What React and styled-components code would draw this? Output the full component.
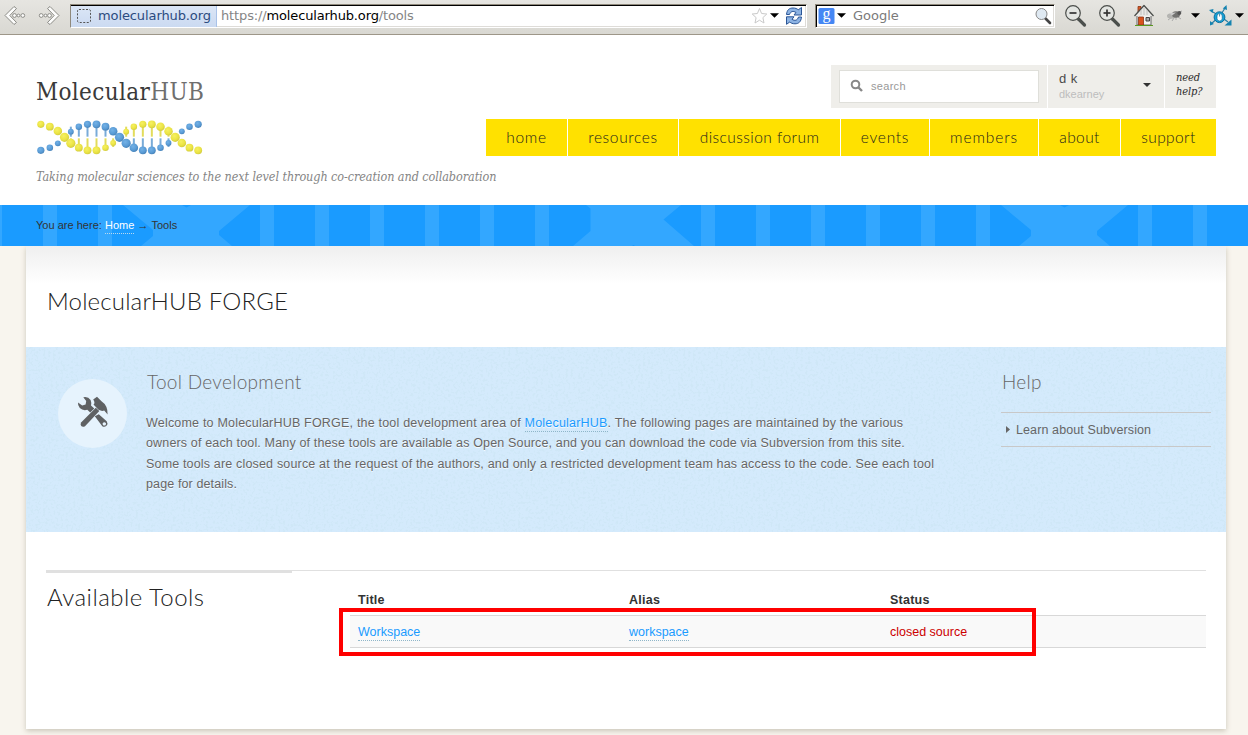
import React from "react";
import styled, { createGlobalStyle } from "styled-components";

const Global = createGlobalStyle`
  * { box-sizing: border-box; }
  html, body { margin: 0; padding: 0; }
  body {
    background: #f8f5ee;
    color: #333;
    font-family: "Liberation Sans", Arial, Helvetica, sans-serif;
    font-size: 12px;
    overflow: hidden;
  }
`;

const Page = styled.div`
  width: 1248px;
  height: 735px;
  overflow: hidden;
`;

/* ---------- browser toolbar ---------- */

const Toolbar = styled.div`
  display: flex;
  align-items: flex-start;
  height: 35px;
  padding: 4px 4px 0 4px;
  background: linear-gradient(#e6e5e1, #d9d8d2);
  border-bottom: 1px solid #9d9688;
  font-family: "DejaVu Sans", Verdana, sans-serif;
  font-size: 13px;
`;

const ToolIcon = styled.svg`
  display: block;
  flex: none;
  width: ${(p) => p.$w}px;
  height: 24px;
  margin-left: ${(p) => p.$gap || 0}px;
`;

const Field = styled.div`
  display: flex;
  align-items: center;
  flex: none;
  width: ${(p) => p.$w}px;
  height: 24px;
  margin-left: ${(p) => p.$gap}px;
  background: #fff;
  border: 1px solid;
  border-color: #8f897c #fff #fff #8f897c;
  box-shadow: inset 1px 1px 0 #000, inset 0 -1px 0 #dedcd8, inset -1px 0 0 #dedcd8;
`;

const Identity = styled.div`
  display: flex;
  align-items: center;
  width: 146px;
  height: 21px;
  padding: 0 0 1px 6px;
  background: linear-gradient(#dbe6f6, #cbdaf1);
  border-right: 1px solid #a9c2e8;
  color: #2b4b80;
  letter-spacing: -0.1px;
  span { margin-left: 7px; white-space: nowrap; }
`;

const Address = styled.div`
  flex: 1;
  padding: 0 0 2px 4px;
  color: #858585;
  letter-spacing: -0.14px;
  white-space: nowrap;
  b { font-weight: normal; color: #000; }
`;

const Placeholder = styled.div`
  flex: 1;
  padding: 0 0 2px 7px;
  color: #7a7a7a;
`;

const FieldIcon = styled.svg`
  display: block;
  flex: none;
  width: ${(p) => p.$w}px;
  height: 20px;
  margin-left: ${(p) => p.$gap || 0}px;
`;

/* ---------- site header ---------- */

const Header = styled.header`
  display: flex;
  justify-content: space-between;
  height: 170px;
  padding: 30px 32px 0 36px;
  background: #fff;
`;

const Brand = styled.div`
  width: 450px;
`;

const Logo = styled.div`
  height: 54px;
  padding-top: 13px;
  color: #3a3a3a;
  font: 24px/28px "DejaVu Serif Condensed", "DejaVu Serif", serif;
  font-stretch: condensed;
  letter-spacing: 0.37px;
  white-space: nowrap;
  em { font-style: normal; color: #6e6e6e; }
`;

const Helix = styled.svg`
  display: block;
  width: 167px;
  height: 35px;
  margin-top: 1px;
`;

const Tagline = styled.div`
  margin-top: 12px;
  color: #858585;
  font: italic 12.5px/20px "DejaVu Serif Condensed", "DejaVu Serif", serif;
  font-stretch: condensed;
  letter-spacing: -0.07px;
  white-space: nowrap;
`;

const HeaderRight = styled.div`
  display: flex;
  flex-direction: column;
  align-items: flex-end;
`;

const Account = styled.div`
  display: flex;
  gap: 1px;
  height: 43px;
`;

const AccountCell = styled.div`
  width: ${(p) => p.$w}px;
  background: #efeeea;
`;

const SearchBox = styled.div`
  display: flex;
  align-items: center;
  width: 200px;
  height: 33px;
  margin: 5px 0 0 8px;
  padding: 0 0 2px 10px;
  background: #fff;
  border: 1px solid #dfdfda;
  color: #999;
  font-size: 11px;
  letter-spacing: 0.3px;
  svg { margin-right: 7px; }
`;

const User = styled(AccountCell)`
  display: flex;
  justify-content: space-between;
  padding: 6px 13px 0 11px;
  svg { margin-top: 12px; }
`;

const UserName = styled.div`
  color: #4a4a4a;
  font: 13px/16px "Liberation Sans", sans-serif;
  letter-spacing: 0.4px;
`;

const UserLogin = styled.div`
  color: #bdbdbd;
  font: 11px/15px "Liberation Sans", sans-serif;
`;

const NeedHelp = styled(AccountCell)`
  padding: 6px 0 0 11px;
  color: #2c2c2c;
  font: italic 11px/14px "DejaVu Serif Condensed", "DejaVu Serif", serif;
  font-stretch: condensed;
  letter-spacing: -0.1px;
`;

const Nav = styled.nav`
  display: flex;
  gap: 1px;
  margin-top: 11px;
`;

const NavItem = styled.a`
  width: ${(p) => p.$w}px;
  height: 37px;
  background: #ffe100;
  color: #1c1c1c;
  font: 300 15.5px/37px Lato, sans-serif;
  letter-spacing: ${(p) => p.$ls || 0.75}px;
  text-align: center;
  white-space: nowrap;
`;

/* ---------- breadcrumb ---------- */

const Crumbs = styled.div`
  position: relative;
  height: 41px;
  padding: 12px 36px 0;
  background: #1a9bff;
  font-size: 11px;
  line-height: 16px;
`;

const CrumbPattern = styled.svg`
  position: absolute;
  inset: 0;
  width: 1248px;
  height: 41px;
`;

const CrumbText = styled.div`
  position: relative;
  color: #333;
  letter-spacing: 0.02px;
  white-space: nowrap;
  a { display: inline-block; color: #fff; border-bottom: 1px dotted #b8d8ef; }
`;

/* ---------- content card ---------- */

const Card = styled.main`
  width: 1200px;
  height: 483px;
  margin: 0 22px 0 26px;
  background: linear-gradient(#efefef, #fff 38px) #fff;
  box-shadow: 0 2px 5px rgba(90, 80, 50, 0.28);
`;

const Title = styled.h1`
  height: 101px;
  margin: 0;
  padding: 40px 0 0 21px;
  color: #222;
  font: 300 24px/30px Lato, sans-serif;
  letter-spacing: 0.17px;
`;

const Intro = styled.section`
  position: relative;
  display: flex;
  height: 185px;
  padding: 0 15px 0 32px;
  background: #d4eafc;
  color: #666;
`;

const Grain = styled.svg`
  position: absolute;
  inset: 0;
  width: 100%;
  height: 100%;
`;

const Badge = styled.div`
  position: relative;
  display: flex;
  align-items: center;
  justify-content: center;
  width: 69px;
  height: 69px;
  margin-top: 32px;
  padding-bottom: 4px;
  background: #e6f3fd;
  border-radius: 50%;
`;

const IntroText = styled.div`
  position: relative;
  width: 820px;
  margin-left: 19px;
  padding-top: 23px;
`;

const Aside = styled.div`
  position: relative;
  width: 210px;
  margin-left: auto;
  padding-top: 23px;
`;

const SubTitle = styled.h2`
  margin: 0;
  padding-left: 1px;
  color: #666;
  font: 300 19px/24px Lato, sans-serif;
  letter-spacing: 0.3px;
`;

const Copy = styled.p`
  margin: 19px 0 0;
  font-size: 12.5px;
  line-height: 20.4px;
  text-shadow: 0 1px 0 rgba(255, 255, 255, 0.8);
`;

const CopyLine = styled.span`
  display: block;
  letter-spacing: ${(p) => p.$ls}px;
  white-space: nowrap;
`;

const Link = styled.a`
  display: inline-block;
  color: #1a9bff;
  line-height: 15px;
  border-bottom: 1px dotted #8fb6c9;
`;

const HelpLink = styled.div`
  display: flex;
  align-items: center;
  height: 35px;
  margin-top: 18px;
  padding-left: 5px;
  border-top: 1px solid #c8c8c8;
  border-bottom: 1px solid #c8c8c8;
  font-size: 12.5px;
  letter-spacing: 0.11px;
  svg { margin-right: 6px; }
`;

const Tools = styled.section`
  display: flex;
  margin: 38px 20px 0;
`;

const ToolsTitle = styled.h2`
  width: 246px;
  margin: 0;
  padding: 9px 0 0 1px;
  border-top: 3px solid #e0e0e0;
  color: #222;
  font: 300 24px/30px Lato, sans-serif;
  letter-spacing: 0.46px;
`;

const TableWrap = styled.div`
  position: relative;
  flex: 1;
  padding: 13px 0 0 58px;
  border-top: 1px solid #e0e0e0;
`;

const TableRow = styled.div`
  display: grid;
  grid-template-columns: 271px 261px 1fr;
  align-items: center;
  height: ${(p) => (p.$head ? 31 : 33)}px;
  padding-left: 8px;
  font-size: 12.5px;
  ${(p) =>
    p.$head
      ? "font-weight: bold; color: #333; letter-spacing: 0.25px;"
      : "background: #f9f9f9; border-top: 1px solid #d8d8d8; border-bottom: 1px solid #d8d8d8;"}
`;

const ToolCell = styled.span`
  padding-top: 2px;
`;

const Closed = styled.span`
  color: #c00;
`;

const Highlight = styled.div`
  position: absolute;
  left: 47px;
  top: 37px;
  width: 697px;
  height: 48px;
  border: 4px solid #f00;
`;

/* ---------- drawings ---------- */

const yellow = [[62,178,10],[89,185,11],[113,198,12],[133,217,13],[152,235,13],[176,248,11],[202,256,11],[229,256,11],[256,248,9],[279,234,8],[318,200,8],[341,185,9],[368,178,10],[395,178,11],[421,185,12],[445,199,12],[465,217,13],[485,234,12],[508,248,11],[534,256,11]];
const blue = [[62,256,10],[89,248,9],[113,235,8],[152,200,8],[176,185,9],[202,178,10],[229,178,11],[256,185,11],[279,199,12],[298,217,13],[318,235,13],[341,248,12],[368,256,11],[395,256,11],[421,248,9],[445,234,8],[485,199,8],[508,185,9],[534,178,10]];
const rungsA = [152, 176, 202, 229, 256, 279];
const rungsB = [318, 341, 368, 395, 421, 445];

const Dna = () => (
  <Helix viewBox="48 165 500 105">
    <defs>
      <radialGradient id="ball-y" cx="0.4" cy="0.35" r="0.7">
        <stop offset="0" stopColor="#f6f062" />
        <stop offset="0.6" stopColor="#ebe444" />
        <stop offset="1" stopColor="#cfc840" />
      </radialGradient>
      <radialGradient id="ball-b" cx="0.4" cy="0.35" r="0.7">
        <stop offset="0" stopColor="#73b1e6" />
        <stop offset="0.6" stopColor="#5a9cd6" />
        <stop offset="1" stopColor="#447fb5" />
      </radialGradient>
    </defs>
    {rungsA.map((x) => (
      <g key={x} strokeWidth="6">
        {x < 279 && <path d={`M${x} 185V215`} stroke="#79abd8" />}
        <path d={`M${x} 220V246`} stroke="#e2dc5c" />
      </g>
    ))}
    {rungsB.map((x) => (
      <g key={x} strokeWidth="6">
        <path d={`M${x} 185V215`} stroke="#e2dc5c" />
        {x > 318 && <path d={`M${x} 220V246`} stroke="#79abd8" />}
      </g>
    ))}
    {blue.map(([x, y, r]) => <circle key={`${x}${y}`} cx={x} cy={y} r={r + 0.8} fill="url(#ball-b)" />)}
    {yellow.map(([x, y, r]) => <circle key={`${x}${y}`} cx={x} cy={y} r={r + 0.8} fill="url(#ball-y)" />)}
  </Helix>
);

const stripes = [-12, 43, 98, 260, 315, 370, 425, 480, 535, 701, 756, 811, 866, 921, 976, 1138, 1193];

const Pattern = () => (
  <CrumbPattern viewBox="0 0 1248 41">
    <g fill="#33a7ff">
      {stripes.map((x) => <rect key={x} x={x} y="0" width="14" height="41" />)}
      <path d="M123 0L153 25V31L141 41H232L219 30V26L250 0H191L186.500 2.500L182 0Z" />
      <path d="M586 0L590.500 3.500V26L573 41H632L633.500 40L635 41H694L663.500 14.500L681 0Z" />
      <path d="M1001 0L1031 25V31L1019 41H1110L1097 30V26L1128 0H1069L1064.500 2.500L1060 0Z" />
    </g>
  </CrumbPattern>
);

const Caret = () => <path d="M0 0H10L5 5Z" fill="#000" />;

const Magnifier = ({ sign }) => (
  <>
    <path d="M14.500 15L20.500 21" stroke="#4b4f4c" strokeWidth="3.200" strokeLinecap="round" />
    <circle cx="9" cy="9" r="7.300" fill="#e3e5e2" stroke="#4a4d4a" strokeWidth="1.200" />
    <path d="M5.500 9H12.500" stroke="#333" strokeWidth="1.700" />
    {sign === "+" && <path d="M9 5.500V12.500" stroke="#333" strokeWidth="1.700" />}
  </>
);

const BackForward = () => (
  <ToolIcon $w={58} viewBox="4 4 58 24" fill="#fcfcfb" stroke="#8b8b86" strokeWidth="1">
    <path d="M14 6.500L5 15.500L14 24.500L16.500 22.500L9.800 15.500L16.500 8.500Z" />
    <circle cx="14.500" cy="15.500" r="1.900" />
    <circle cx="18.500" cy="15.500" r="1.400" />
    <circle cx="22.800" cy="15.500" r="1.900" />
    <path d="M50 6.500L59 15.500L50 24.500L47.500 22.500L54.200 15.500L47.500 8.500Z" />
    <circle cx="41.200" cy="15.500" r="1.900" />
    <circle cx="45.500" cy="15.500" r="1.400" />
    <circle cx="49.500" cy="15.500" r="1.900" />
  </ToolIcon>
);

const Reload = () => (
  <g fill="#8db3e3" stroke="#2a5596" strokeWidth="1" strokeLinejoin="round">
    <path d="M1.500 8.500C2 3.500 4.500 2 8 2C10.500 2 12 2.700 13.200 3.800L16.500 1.500V9H9L11 6.500C8 4.500 5.500 5.500 4.500 8.500Z" />
    <path d="M16.500 11C16 16 13.500 17.800 10 17.800C7.500 17.800 6 17.100 4.800 16L1.500 18.300V10.800H9L7 13.300C10 15.300 12.500 14.300 13.500 11Z" />
  </g>
);

const Home = () => (
  <>
    <path d="M4 11H18V21H4Z" fill="#f4f4f2" stroke="#666" />
    <path d="M5 2.500H8V8H5Z" fill="#d65a2a" stroke="#8c3514" strokeWidth=".8" />
    <path d="M1.500 12L11 1.500L20.500 12" fill="#e9e9e6" stroke="#4c4f4c" strokeWidth="1.300" strokeLinejoin="round" />
    <path d="M8 6V11M11 4V11M14 6V11" stroke="#b5b5b2" strokeWidth=".8" />
    <path d="M5.500 13H10.500V21H5.500Z" fill="#d9531e" stroke="#8c3514" strokeWidth=".8" />
    <path d="M13 13.500H16.500V17H13Z" fill="#aaa" stroke="#444" />
    <path d="M2 21.500H20" stroke="#5b9a1e" strokeWidth="1" />
  </>
);

const Bug = () => (
  <>
    <path d="M1 12L5 10M2 16L6 13M6 17L8 14M10 16L10 13M13 8L16 7M12 13L15 15" stroke="#aaa" strokeWidth="1" />
    <ellipse cx="5.500" cy="12" rx="4.500" ry="2.800" fill="#b5b5b2" />
    <ellipse cx="10" cy="10.500" rx="4" ry="3.300" fill="#737371" />
    <circle cx="13.300" cy="9" r="2" fill="#555" />
    <path d="M3 9L10 8.500L6 11.500Z" fill="#ccc" />
  </>
);

const Molecule = () => (
  <g stroke="#2a7fa5" fill="none">
    <path d="M11 12L2 7M11 12L16 4M11 12L2 20M11 12L19 18" strokeWidth="1.200" />
    <path d="M13.800 4.500L17.500 1L18 6ZM22.500 15.500V21.500H15.500ZM0 6L4.500 5L3.500 9ZM1 21.500L1 17L5 20Z" fill="#1583b0" stroke="none" />
    <circle cx="10.500" cy="13.200" r="5.400" fill="#14a3da" stroke="#0c6d9a" />
    <rect x="8" y="9.500" width="5.200" height="7.500" rx="2.500" fill="#fff" stroke="#0c6d9a" strokeWidth=".7" />
    <path d="M10.600 10V12.500" stroke="#0c6d9a" strokeWidth=".8" />
  </g>
);

const HammerWrench = () => (
  <svg width="32" height="32" viewBox="0 0 32 32" fill="#5f6163">
    <path d="M4.300 26.200L18.800 11.700L22.300 15L8 30.200Q5.800 31.500 4.200 30Q2.900 28.300 4.300 26.200Z" />
    <path d="M16.200 3.400L20 .8L24.500 5.200Q31 9.500 30.600 18.600L27.200 14.600L25.200 15L21.500 13.800L16.500 8.500Q18.500 6.800 16.200 3.400Z" />
    <path d="M6.300 1.300Q11 .2 13.600 4Q14.800 7 14 9.600L17.300 12.600L13.200 16.600L10.300 13.800Q5.800 15 2.800 12Q.6 9.500 1 6.600L5.200 9.400L8.600 8.500L9.200 5Z" />
    <path fillRule="evenodd" d="M17.800 20.300L21.800 18.300L29.700 25.300Q31.300 27.600 29.500 29.800Q27.400 31.600 25.300 30.200ZM27.300 26.200A1.700 1.700 0 1 0 27.310 26.200Z" />
  </svg>
);

export default function App() {
  return (
    <Page>
      <Global />
      <Toolbar>
        <BackForward />
        <Field $w={737} $gap={8}>
          <Identity>
            <svg width="14" height="14" viewBox="0 0 14 14">
              <rect x=".5" y=".5" width="13" height="13" rx="1.500" fill="none" stroke="#555" strokeDasharray="2 1.500" />
            </svg>
            <span>molecularhub.org</span>
          </Identity>
          <Address>https://<b>molecularhub.org</b>/tools</Address>
          <FieldIcon $w={17} viewBox="0 0 17 20">
            <path d="M8.500 2.500L10.600 7.500L15.800 8L11.900 11.600L13 17L8.500 14.200L4 17L5.100 11.600L1.200 8L6.400 7.500Z" fill="#fff" stroke="#c9c9c9" />
          </FieldIcon>
          <FieldIcon $w={9} $gap={2} viewBox="0 -7 10 20"><Caret /></FieldIcon>
          <FieldIcon $w={18} $gap={6} viewBox="0 0 18 20"><Reload /></FieldIcon>
          <FieldIcon $w={3} />
        </Field>
        <Field $w={240} $gap={8}>
          <FieldIcon $w={17} $gap={2} viewBox="0 0 17 20">
            <rect x=".5" y="2" width="16" height="16" rx="1.500" fill="#4587f4" />
            <text x="8.500" y="13" textAnchor="middle" fill="#fff" fontFamily="Liberation Serif, serif" fontSize="16">g</text>
          </FieldIcon>
          <FieldIcon $w={9} $gap={2} viewBox="0 -7 10 20"><Caret /></FieldIcon>
          <Placeholder>Google</Placeholder>
          <FieldIcon $w={18} viewBox="0 0 18 20">
            <path d="M11.500 12.500L16 17" stroke="#444" strokeWidth="2.600" strokeLinecap="round" />
            <circle cx="7.500" cy="8" r="5.500" fill="#dfe9f2" stroke="#888" />
          </FieldIcon>
          <FieldIcon $w={2} />
        </Field>
        <ToolIcon $w={23} $gap={9} viewBox="0 0 23 24"><Magnifier /></ToolIcon>
        <ToolIcon $w={23} $gap={11} viewBox="0 0 23 24"><Magnifier sign="+" /></ToolIcon>
        <ToolIcon $w={22} $gap={12} viewBox="0 0 22 24"><Home /></ToolIcon>
        <ToolIcon $w={17} $gap={11} viewBox="0 0 17 24"><Bug /></ToolIcon>
        <ToolIcon $w={9} $gap={8} viewBox="0 -9 10 24"><Caret /></ToolIcon>
        <ToolIcon $w={23} $gap={9} viewBox="0 0 23 24"><Molecule /></ToolIcon>
        <ToolIcon $w={9} $gap={3} viewBox="0 -9 10 24"><Caret /></ToolIcon>
      </Toolbar>

      <Header>
        <Brand>
          <Logo>Molecular<em>HUB</em></Logo>
          <Dna />
          <Tagline>Taking molecular sciences to the next level through co-creation and collaboration</Tagline>
        </Brand>
        <HeaderRight>
          <Account>
            <AccountCell $w={216}>
              <SearchBox>
                <svg width="14" height="14" viewBox="0 0 14 14" fill="none" stroke="#888">
                  <circle cx="5.500" cy="5.500" r="3.800" strokeWidth="2" />
                  <path d="M8.500 8.500L12 12" strokeWidth="2.400" />
                </svg>
                search
              </SearchBox>
            </AccountCell>
            <User $w={116}>
              <div>
                <UserName>d k</UserName>
                <UserLogin>dkearney</UserLogin>
              </div>
              <svg width="8" height="4" viewBox="0 0 8 4"><path d="M0 0H8L4 4Z" fill="#333" /></svg>
            </User>
            <NeedHelp $w={51}>need<br />help?</NeedHelp>
          </Account>
          <Nav>
            <NavItem $w={81}>home</NavItem>
            <NavItem $w={110} $ls={0.65}>resources</NavItem>
            <NavItem $w={161} $ls={0.45}>discussion forum</NavItem>
            <NavItem $w={88}>events</NavItem>
            <NavItem $w={108} $ls={0.9}>members</NavItem>
            <NavItem $w={81} $ls={0.4}>about</NavItem>
            <NavItem $w={95} $ls={0.4}>support</NavItem>
          </Nav>
        </HeaderRight>
      </Header>

      <Crumbs>
        <Pattern />
        <CrumbText>You are here: <a>Home</a> → Tools</CrumbText>
      </Crumbs>

      <Card>
        <Title>MolecularHUB FORGE</Title>
        <Intro>
          <Grain>
            <filter id="grain" x="0" y="0" width="100%" height="100%">
              <feTurbulence type="fractalNoise" baseFrequency="0.4" numOctaves="2" seed="4" />
              <feColorMatrix values="0 0 0 0 0.55  0 0 0 0 0.76  0 0 0 0 0.84  0 0 0 6 -3" />
            </filter>
            <rect width="100%" height="100%" filter="url(#grain)" opacity="0.3" />
          </Grain>
          <Badge><HammerWrench /></Badge>
          <IntroText>
            <SubTitle>Tool Development</SubTitle>
            <Copy>
              <CopyLine $ls={0.2}>Welcome to MolecularHUB FORGE, the tool development area of <Link>MolecularHUB</Link>. The following pages are maintained by the various</CopyLine>
              <CopyLine $ls={0.155}>owners of each tool. Many of these tools are available as Open Source, and you can download the code via Subversion from this site.</CopyLine>
              <CopyLine $ls={0.17}>Some tools are closed source at the request of the authors, and only a restricted development team has access to the code. See each tool</CopyLine>
              <CopyLine $ls={0.12}>page for details.</CopyLine>
            </Copy>
          </IntroText>
          <Aside>
            <SubTitle>Help</SubTitle>
            <HelpLink>
              <svg width="4" height="7" viewBox="0 0 4 7"><path d="M0 0L4 3.500L0 7Z" fill="#666" /></svg>
              Learn about Subversion
            </HelpLink>
          </Aside>
        </Intro>
        <Tools>
          <ToolsTitle>Available Tools</ToolsTitle>
          <TableWrap>
            <TableRow $head><span>Title</span><span>Alias</span><span>Status</span></TableRow>
            <TableRow>
              <ToolCell><Link>Workspace</Link></ToolCell>
              <ToolCell><Link>workspace</Link></ToolCell>
              <Closed>closed source</Closed>
            </TableRow>
            <Highlight />
          </TableWrap>
        </Tools>
      </Card>
    </Page>
  );
}
